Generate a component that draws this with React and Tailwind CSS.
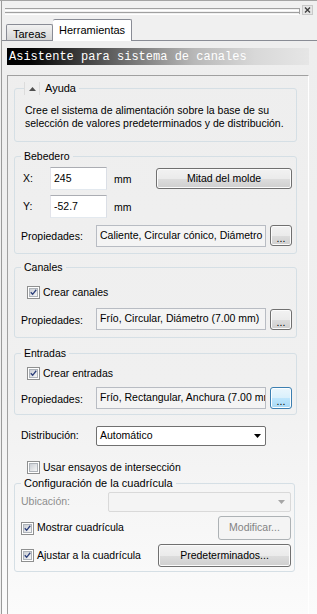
const btnBase =
  "flex items-center justify-center rounded-[3px] border border-[#707070] bg-[linear-gradient(to_bottom,#f2f2f2_0%,#ebebeb_50%,#dddddd_51%,#cfcfcf_100%)] shadow-[inset_0_0_0_1px_#fbfbfb] text-black";

function Button({ className = "", children }) {
  return <div className={`${btnBase} ${className}`}>{children}</div>;
}

function Check({ checked }) {
  return (
    <div className="w-[13px] h-[13px] shrink-0 border border-[#8e8f8f] bg-white p-[1px]">
      <div className="w-full h-full border border-[#aeb3b9] bg-[linear-gradient(135deg,#cbcfd5_0%,#f6f6f6_100%)] flex items-center justify-center">
        {checked && (
          <svg width="9" height="9" viewBox="0 0 9 9">
            <path d="M1 4.2 L3.4 6.8 L8 1" fill="none" stroke="#2c3f7a" strokeWidth="1.7" />
          </svg>
        )}
      </div>
    </div>
  );
}

function Field({ children }) {
  return (
    <div className="w-[170px] h-[22px] shrink-0 border border-[#b8bcc3] bg-[#f4f4f4] pl-[3px] pt-[3px] whitespace-nowrap overflow-hidden leading-[13px]">
      {children}
    </div>
  );
}

function PropsRow({ text, focused, h = "h-[22px]" }) {
  return (
    <div className={`flex items-center ${h}`}>
      <span className="w-[75px] shrink-0 pt-[3px]">Propiedades:</span>
      <Field>{text}</Field>
      {focused ? (
        <div className="ml-[4px] w-[22px] h-[22px] rounded-[3px] border border-[#3c7fb1] bg-[linear-gradient(to_bottom,#eaf6fd_0%,#d9f0fc_50%,#bee6fd_51%,#a7d9f5_100%)] shadow-[inset_0_0_0_1px_#fcfeff] flex items-end justify-center pb-[3px] leading-[8px]">
          ...
        </div>
      ) : (
        <Button className="ml-[4px] w-[22px] h-[21px] items-end pb-[3px] leading-[8px]">...</Button>
      )}
    </div>
  );
}

function Group({ legend, className = "", children }) {
  return (
    <fieldset className={`border border-[#d5dfe5] rounded-[3px] ml-[6px] mr-[11px] ${className}`}>
      <legend className="ml-[6px] px-[3px] leading-[13px]">{legend}</legend>
      {children}
    </fieldset>
  );
}

export default function App() {
  return (
    <div className="w-[317px] h-[614px] overflow-hidden bg-[#f0f0f0] border-t border-[#a3a3a3] flex flex-col font-['Liberation_Sans',Arial,sans-serif] text-[10.5px] text-black">
      <div className="flex-1 flex flex-col ml-[1px] border-l border-[#9a9a9a]">
        {/* grip */}
        <div className="h-[18px] flex items-center pl-[3px] pr-[4px]">
          <div className="flex-1 flex items-center">
            <div className="flex-1 flex flex-col gap-[1px] mt-[2px]">
              <div className="h-[1px] bg-[#a0a0a0]" />
              <div className="h-[1px] bg-white" />
              <div className="h-[1px] bg-[#a0a0a0]" />
              <div className="h-[1px] bg-white" />
            </div>
            <div className="w-[1px] h-[6px] bg-[#a0a0a0] mt-[2px]" />
          </div>
          <div className="ml-[2px] w-[11px] h-[10px] border border-[#c8c8c8] bg-[#e6e6e6] flex items-center justify-center">
            <svg width="7" height="6" viewBox="0 0 7 6">
              <path d="M1 0.5 L6 5.5 M6 0.5 L1 5.5" stroke="#404040" strokeWidth="1.4" />
            </svg>
          </div>
        </div>
        {/* tabs */}
        <div className="h-[22px] flex items-end pl-[4px] border-b border-[#898c95]">
          <div className="h-[16px] px-[6px] border border-b-0 border-[#898c95] rounded-t-[2px] bg-[linear-gradient(to_bottom,#f2f2f2,#d6d6d6)] leading-[14px] pt-[2px] text-[11px]">
            Tareas
          </div>
          <div className="h-[22px] px-[6px] -mb-[1px] border border-b-0 border-l-0 border-[#898c95] rounded-t-[2px] bg-white leading-[13px] pt-[4px] text-[11px]">
            Herramientas
          </div>
        </div>
        {/* tab page */}
        <div className="flex-1 flex flex-col pt-[7px] bg-[linear-gradient(to_bottom,#eeeeee_0%,#f0f0f0_60%,#fbfbfb_100%)]">
          <div className="ml-[5px] mr-[8px] h-[17px] bg-[linear-gradient(to_right,#000000_0%,#050505_8%,#6a6a6a_38%,#b8b8b8_62%,#d8d8d8_82%,#e6e6e6_100%)] pl-[2px] flex items-center">
            <span className="font-['Liberation_Mono',monospace] text-[12px] text-white leading-[14px]">
              Asistente para sistema de canales
            </span>
          </div>
          <div className="mt-[10px] ml-[5px] mr-[8px] flex-1 border-t border-l border-[#a0a0a0] border-r border-r-[#ffffff] flex flex-col">
            {/* Ayuda */}
            <fieldset className="border border-[#d5dfe5] rounded-[3px] ml-[6px] mr-[11px] mt-[6px]">
              <legend className="ml-[9px] leading-[13px] flex items-center">
                <span className="w-[16px] h-[13px] border-l border-r border-[#dcdcdc] flex items-center justify-center">
                  <svg width="7" height="4" viewBox="0 0 7 4">
                    <path d="M0 4 L3.5 0 L7 4 Z" fill="#505050" />
                  </svg>
                </span>
                <span className="pl-[5px] pr-[3px] text-[11px]">Ayuda</span>
              </legend>
              <div className="pl-[10px] pt-[9px] pb-[11px] leading-[13px]">
                Cree el sistema de alimentación sobre la base de su
                <br />
                selección de valores predeterminados y de distribución.
              </div>
            </fieldset>

            {/* Bebedero */}
            <Group legend="Bebedero" className="mt-[8px]">
              <div className="pl-[6px] pr-[4px] pt-[4px] pb-[6px] flex flex-col">
                <div className="flex items-center h-[23px]">
                  <span className="w-[29px] shrink-0 pl-[2px]">X:</span>
                  <div className="w-[57px] h-[23px] border border-[#abadb3] border-b-[#e3e9ef] border-l-[#e2e3ea] border-r-[#dbdfe6] bg-white pl-[3px] pt-[4px] leading-[13px]">
                    245
                  </div>
                  <span className="ml-[7px] pt-[3px]">mm</span>
                  <Button className="ml-auto w-[136px] h-[21px]">Mitad del molde</Button>
                </div>
                <div className="flex items-center h-[23px] mt-[5px]">
                  <span className="w-[29px] shrink-0 pl-[2px]">Y:</span>
                  <div className="w-[57px] h-[23px] border border-[#abadb3] border-b-[#e3e9ef] border-l-[#e2e3ea] border-r-[#dbdfe6] bg-white pl-[3px] pt-[4px] leading-[13px]">
                    -52.7
                  </div>
                  <span className="ml-[7px] pt-[3px]">mm</span>
                </div>
                <div className="mt-[6px]">
                  <PropsRow text="Caliente, Circular cónico, Diámetro" h="h-[23px]" />
                </div>
              </div>
            </Group>

            {/* Canales */}
            <Group legend="Canales" className="mt-[7px]">
              <div className="pl-[6px] pr-[4px] pt-[12px] pb-[7px] flex flex-col">
                <div className="flex items-center h-[13px] pl-[6px] gap-[3px]">
                  <Check checked />
                  <span>Crear canales</span>
                </div>
                <div className="mt-[9px]">
                  <PropsRow text="Frío, Circular, Diámetro (7.00 mm)" />
                </div>
              </div>
            </Group>

            {/* Entradas */}
            <Group legend="Entradas" className="mt-[9px]">
              <div className="pl-[6px] pr-[4px] pt-[7px] pb-[5px] flex flex-col">
                <div className="flex items-center h-[13px] pl-[6px] gap-[3px]">
                  <Check checked />
                  <span>Crear entradas</span>
                </div>
                <div className="mt-[7px]">
                  <PropsRow text="Frío, Rectangular, Anchura (7.00 mm)" focused />
                </div>
              </div>
            </Group>

            {/* Distribución */}
            <div className="mt-[11px] ml-[13px] flex items-center h-[20px]">
              <span className="w-[75px] shrink-0">Distribución:</span>
              <div className="w-[170px] h-[20px] border border-[#707070] rounded-[2px] bg-white flex items-center pl-[3px] pr-[4px]">
                <span className="flex-1">Automático</span>
                <svg width="7" height="4" viewBox="0 0 7 4">
                  <path d="M0 0 L7 0 L3.5 4 Z" fill="#000" />
                </svg>
              </div>
            </div>

            {/* Usar ensayos */}
            <div className="mt-[15px] ml-[19px] flex items-center h-[13px] gap-[3px]">
              <Check />
              <span>Usar ensayos de intersección</span>
            </div>

            {/* Configuración */}
            <fieldset className="border border-[#d5dfe5] rounded-[3px] ml-[6px] mr-[13px] mt-[3px]">
              <legend className="ml-[6px] px-[3px] leading-[13px] text-[11px]">Configuración de la cuadrícula</legend>
              <div className="pl-[6px] pr-[3px] pt-[2px] pb-[4px] flex flex-col">
                <div className="flex items-center h-[20px]">
                  <span className="w-[87px] shrink-0 text-[#8d8d8d]">Ubicación:</span>
                  <div className="flex-1 h-[20px] border border-[#d9d9d9] rounded-[2px] bg-[#f4f4f4] flex items-center justify-end pr-[5px]">
                    <svg width="7" height="4" viewBox="0 0 7 4">
                      <path d="M0 0 L7 0 L3.5 4 Z" fill="#a6a6a6" />
                    </svg>
                  </div>
                </div>
                <div className="flex items-center h-[24px] mt-[4px] gap-[3px]">
                  <Check checked />
                  <span>Mostrar cuadrícula</span>
                  <div className="ml-auto w-[73px] h-[24px] rounded-[3px] border border-[#adb2b5] bg-[#f4f4f4] flex items-center justify-center text-[#838383]">
                    Modificar...
                  </div>
                </div>
                <div className="flex items-center h-[23px] mt-[4px] gap-[3px]">
                  <Check checked />
                  <span>Ajustar a la cuadrícula</span>
                  <Button className="ml-auto w-[133px] h-[23px]">Predeterminados...</Button>
                </div>
              </div>
            </fieldset>
          </div>
        </div>
      </div>
    </div>
  );
}
